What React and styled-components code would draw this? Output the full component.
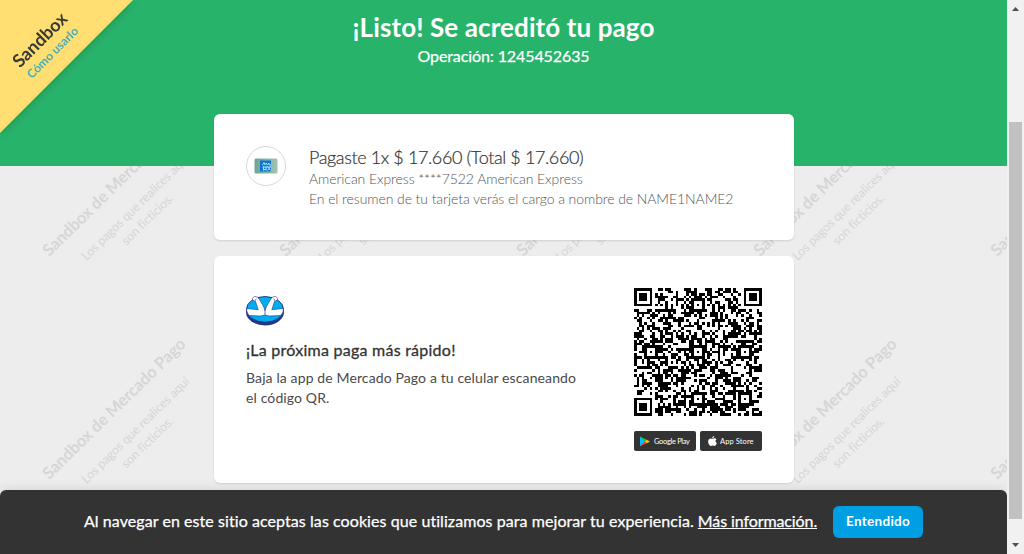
import React from "react";
import styled, { createGlobalStyle } from "styled-components";

const Global = createGlobalStyle`
  * { box-sizing: border-box; }
  body { margin: 0; overflow: hidden; font-family: Lato, "Open Sans", sans-serif; color: #333; }
  p, h1, h2 { margin: 0; font-weight: 400; }
`;

const Screen = styled.div`
  display: flex;
  width: 1024px;
  height: 554px;
  overflow: hidden;
`;

const Page = styled.div`
  position: relative;
  display: flex;
  flex-direction: column;
  width: 1007px;
  height: 554px;
  overflow: hidden;
  background: #ededed;
`;

const Watermarks = styled.div`
  position: absolute;
  top: 74px;
  left: 0;
  display: grid;
  grid-template-columns: repeat(5, 237px);
  grid-auto-rows: 223px;
`;

const Tile = styled.div`
  display: flex;
  align-items: center;
  justify-content: center;
  padding: 31px 0 0 21px;
`;

const Mark = styled.div`
  text-align: center;
  white-space: nowrap;
  color: #d6d6d6;
  transform: rotate(-44.4deg);
`;

const MarkTitle = styled.div`
  font-size: 16.4px;
  line-height: 24px;
  font-weight: 700;
  letter-spacing: -0.05px;
  margin-bottom: 11px;
`;

const MarkText = styled.div`
  font-size: 12.5px;
  line-height: 16.5px;
  letter-spacing: -0.1px;
`;

const Header = styled.header`
  position: relative;
  flex: none;
  height: 166px;
  padding-top: 10px;
  text-align: center;
  background: #27b46a;
  color: #fff;
`;

const Title = styled.h1`
  font-size: 26px;
  line-height: 34px;
  font-weight: 700;
  letter-spacing: 0.1px;
`;

const Operation = styled.p`
  font-size: 16px;
  line-height: 24px;
  letter-spacing: -0.1px;
  -webkit-text-stroke: 0.25px currentColor;
`;

const Ribbon = styled.div`
  position: absolute;
  top: 0;
  left: 0;
  filter: drop-shadow(0 2px 4px rgba(0, 0, 0, 0.18));
`;

const RibbonFace = styled.div`
  width: 133px;
  height: 133px;
  background: #ffdf71;
  clip-path: polygon(0 0, 100% 0, 0 100%);
`;

const RibbonText = styled.div`
  width: 90px;
  height: 90px;
  display: flex;
  flex-direction: column;
  align-items: center;
  justify-content: center;
  transform: rotate(-45deg);
`;

const RibbonTitle = styled.div`
  font-size: 18px;
  line-height: 20px;
  font-weight: 700;
  color: #3a3a36;
`;

const RibbonLink = styled.a`
  font-size: 12px;
  line-height: 17px;
  font-weight: 700;
  color: #45aebd;
`;

const Cards = styled.main`
  position: relative;
  display: flex;
  flex-direction: column;
  gap: 16px;
  width: 580px;
  margin: -52px 0 0 214px;
`;

const Card = styled.section`
  display: flex;
  height: ${(p) => p.$height}px;
  padding: 32px;
  background: #fff;
  border-radius: 6px;
  box-shadow: 0 1px 2px rgba(0, 0, 0, 0.12);
`;

const CardIcon = styled.div`
  display: flex;
  align-items: center;
  justify-content: center;
  width: 40px;
  height: 40px;
  margin-right: 23px;
  border: 1px solid #d8d8d8;
  border-radius: 50%;
`;

const Payment = styled.div`
  margin-top: -1px;
`;

const PaymentTitle = styled.h2`
  font-size: 18px;
  line-height: 24px;
  font-weight: 300;
  letter-spacing: -0.38px;
  white-space: nowrap;
  -webkit-text-stroke: 0.2px currentColor;
`;

const PaymentLine = styled.p`
  font-size: 14px;
  line-height: 20px;
  font-weight: 300;
  letter-spacing: -0.08px;
  color: #555;
  white-space: nowrap;
`;

const AppInfo = styled.div`
  flex: 1;
  padding-top: 7px;
`;

const AppTitle = styled.h2`
  margin-top: 14px;
  font-size: 16px;
  line-height: 20px;
  letter-spacing: 0.25px;
  -webkit-text-stroke: 0.3px currentColor;
`;

const AppText = styled.p`
  margin-top: 8px;
  font-size: 14px;
  line-height: 20px;
  letter-spacing: 0.12px;
  color: #4a4a4a;
  white-space: nowrap;
`;

const Download = styled.div`
  width: 128px;
`;

const Stores = styled.div`
  display: flex;
  gap: 4px;
  margin-top: 15px;
`;

const Store = styled.div`
  display: flex;
  align-items: center;
  gap: ${(p) => p.$gap}px;
  width: 62px;
  height: 20px;
  padding-left: ${(p) => p.$pad}px;
  border-radius: 2px;
  background: #333;
  color: #fff;
  font-size: 7.5px;
  letter-spacing: ${(p) => p.$tracking}px;
  white-space: nowrap;
`;

const CookieBar = styled.footer`
  position: absolute;
  left: 0;
  bottom: 0;
  display: flex;
  align-items: center;
  justify-content: center;
  width: 1007px;
  height: 64px;
  border-radius: 6px 6px 0 0;
  background: #333;
  color: #fff;
  box-shadow: 0 0 12px rgba(0, 0, 0, 0.12);
  white-space: nowrap;
`;

const CookieText = styled.p`
  padding-bottom: 3px;
  font-size: 16px;
  letter-spacing: 0.07px;
  -webkit-text-stroke: 0.25px currentColor;
`;

const MoreLink = styled.a`
  margin-left: 4px;
  letter-spacing: -0.1px;
  text-decoration: underline;
`;

const Accept = styled.button`
  width: 90px;
  height: 32px;
  margin-left: 16px;
  padding: 0 0 2px;
  border: 0;
  border-radius: 6px;
  background: #009ee3;
  color: #fff;
  font: 700 13.5px Lato, sans-serif;
  letter-spacing: 0.3px;
`;

const Scrollbar = styled.div`
  display: flex;
  flex-direction: column;
  align-items: center;
  width: 17px;
  height: 554px;
  background: #f1f1f1;
`;

const Thumb = styled.div`
  width: 13px;
  height: 397px;
  margin: 105px 0 auto;
  background: #c1c1c1;
`;

const Arrow = styled.svg`
  display: block;
  width: 17px;
  height: 17px;
`;

const SIZE = 49;

function ring(x, y, cx, cy, outer) {
  const d = Math.max(Math.abs(x - cx), Math.abs(y - cy));
  if (d > outer) return null;
  if (outer === 4) return d === 3 || d <= 1;
  return d !== 1;
}

function buildCode() {
  let seed = 91735;
  let path = "";
  const finders = [[3, 3], [45, 3], [3, 45]];
  const aligns = [[24, 6], [6, 24], [24, 24], [42, 24], [24, 42], [42, 42]];
  for (let y = 0; y < SIZE; y++) {
    for (let x = 0; x < SIZE; x++) {
      seed ^= seed << 13;
      seed ^= seed >>> 17;
      seed ^= seed << 5;
      let on = (seed >>> 9) % 100 < 50;
      if (x === 6) on = y % 2 === 0;
      if (y === 6) on = x % 2 === 0;
      for (const [cx, cy] of aligns) {
        const r = ring(x, y, cx, cy, 2);
        if (r !== null) on = r;
      }
      for (const [cx, cy] of finders) {
        const r = ring(x, y, cx, cy, 4);
        if (r !== null) on = r;
      }
      if (on) path += `M${x} ${y}h1v1h-1z`;
    }
  }
  return path;
}

const codePath = buildCode();

const Code = styled.svg`
  display: block;
  width: 128px;
  height: 128px;
`;

const Logo = styled.svg`
  display: block;
  width: 39px;
  height: 31px;
`;

export default function App() {
  return (
    <Screen>
      <Global />
      <Page>
        <Watermarks>
          {Array.from({ length: 10 }, (_, i) => (
            <Tile key={i}>
              <Mark>
                <MarkTitle>Sandbox de Mercado Pago</MarkTitle>
                <MarkText>Los pagos que realices aquí</MarkText>
                <MarkText>son ficticios.</MarkText>
              </Mark>
            </Tile>
          ))}
        </Watermarks>
        <Header>
          <Title>¡Listo! Se acreditó tu pago</Title>
          <Operation>Operación: 1245452635</Operation>
          <Ribbon>
            <RibbonFace>
              <RibbonText>
                <RibbonTitle>Sandbox</RibbonTitle>
                <RibbonLink>Cómo usarlo</RibbonLink>
              </RibbonText>
            </RibbonFace>
          </Ribbon>
        </Header>
        <Cards>
          <Card $height={126}>
            <CardIcon>
              <svg width="24" height="16" viewBox="0 0 24 16">
                <defs>
                  <linearGradient id="amex" x1="0" x2="1">
                    <stop offset="0" stopColor="#6fa397" />
                    <stop offset="1" stopColor="#9fc4b0" />
                  </linearGradient>
                </defs>
                <rect x="0.5" y="0.5" width="23" height="15" rx="1.5" fill="url(#amex)" />
                <rect x="6" y="2.500" width="11" height="11" fill="#0a76d4" />
                <path d="M8.500 7 10 4.500 11 7M12 7V5l1.500 1.500L15 5v2h2M8.500 9H17M9.500 8.500v4M12 8.500v4M9.500 11.500H12M13.500 8.500l3 4M16.500 8.500l-3 4" fill="none" stroke="#b9ddf5" strokeWidth="1" />
              </svg>
            </CardIcon>
            <Payment>
              <PaymentTitle>Pagaste 1x $ 17.660 (Total $ 17.660)</PaymentTitle>
              <PaymentLine>American Express ****7522 American Express</PaymentLine>
              <PaymentLine>En el resumen de tu tarjeta verás el cargo a nombre de NAME1NAME2</PaymentLine>
            </Payment>
          </Card>
          <Card $height={227}>
            <AppInfo>
              <Logo viewBox="0 0 39 31">
                <ellipse cx="19" cy="17" rx="19" ry="13.4" fill="#253585" />
                <ellipse cx="19" cy="14.4" rx="18.5" ry="12.8" fill="#00aeef" stroke="#253585" />
                <path d="M6.200 3.700 8.400 1.300 11.500 2 13.800 5 17.800 12 19 16 20.200 12 24.200 5 26.500 2 29.600 1.300 31.800 3.700 31.200 5.200 28.500 6.500 25.800 14.700 32.500 14 37.400 13.500C37.400 17.500 35.800 19.500 34.500 20.500L23.500 21 19 20 14.500 21 3.500 20.500C2.200 19.500.6 17.500.6 13.500L5.500 14 12.200 14.700 9.500 6.500 6.800 5.200Z" fill="#fff" stroke="#253585" strokeWidth=".6" strokeLinejoin="round" />
                <path d="M19 16v4M9.200 5.800l1-2.200M28.800 5.800l-1-2.200" stroke="#253585" strokeWidth=".7" />
              </Logo>
              <AppTitle>¡La próxima paga más rápido!</AppTitle>
              <AppText>
                Baja la app de Mercado Pago a tu celular escaneando
                <br />
                el código QR.
              </AppText>
            </AppInfo>
            <Download>
              <Code viewBox="0 0 49 49" shapeRendering="crispEdges">
                <path d={codePath} fill="#000" />
              </Code>
              <Stores>
                <Store $pad={6} $gap={4} $tracking={-0.33}>
                  <svg width="10" height="11" viewBox="0 0 10 11">
                    <path d="M0 .5v10L5 5.5z" fill="#00c3ff" />
                    <path d="M0 .5 7 4 5 5.8z" fill="#00d36d" />
                    <path d="M0 10.5 7 7 5 5.2z" fill="#f33b4b" />
                    <path d="M6.7 3.7 10 5.5 6.7 7.3 4.9 5.5z" fill="#ffc400" />
                  </svg>
                  Google Play
                </Store>
                <Store $pad={8} $gap={3} $tracking={0.1}>
                  <svg width="9" height="10" viewBox="0 0 18 20">
                    <path d="M12.3 0c.2 2.300-1.800 4.500-3.800 4.400C8.300 2.200 10.200.2 12.300 0zM9.200 5.700c1 0 2.200-1 4-1 1.600 0 2.900.8 3.800 2-3.200 2-2.600 6.300.8 7.500C16.800 16.900 15 20 13 20c-1.300 0-1.900-.8-3.500-.8S7.200 20 6 20C3 20 .3 15 .3 11.300.3 7.200 2.800 4.900 5.400 4.900c1.600 0 2.900.8 3.800.8z" fill="#fff" />
                  </svg>
                  App Store
                </Store>
              </Stores>
            </Download>
          </Card>
        </Cards>
        <CookieBar>
          <CookieText>
            Al navegar en este sitio aceptas las cookies que utilizamos para mejorar tu experiencia.
            <MoreLink>Más información.</MoreLink>
          </CookieText>
          <Accept>Entendido</Accept>
        </CookieBar>
      </Page>
      <Scrollbar>
        <Arrow viewBox="0 0 17 17">
          <path d="M5 11h7L8.500 7z" fill="#505050" />
        </Arrow>
        <Thumb />
        <Arrow viewBox="0 0 17 17">
          <path d="M5 6h7L8.500 10z" fill="#505050" />
        </Arrow>
      </Scrollbar>
    </Screen>
  );
}
